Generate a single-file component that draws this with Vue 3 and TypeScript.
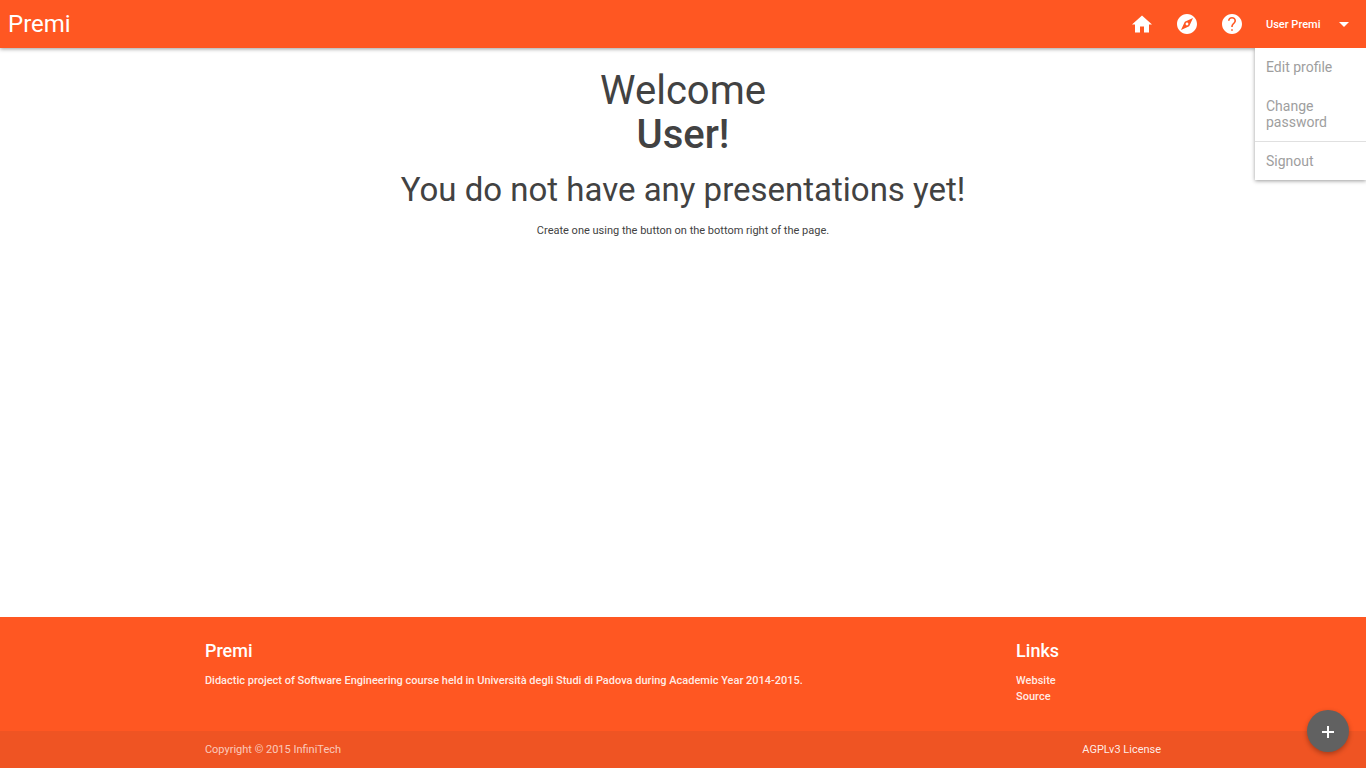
<script setup lang="ts">
interface NavIcon {
  label: string
  path: string
}

const navIcons: NavIcon[] = [
  { label: 'Home', path: 'M10 20.5v-6h4v6h5v-8h3L12 3.5 2 12.5h3v8z' },
  {
    label: 'Explore',
    path: 'M12 10.6c-.77 0-1.4.63-1.4 1.4s.63 1.4 1.4 1.4c.77 0 1.4-.63 1.4-1.4s-.63-1.4-1.4-1.4zM12 2C6.48 2 2 6.48 2 12s4.48 10 10 10 10-4.48 10-10S17.52 2 12 2zm2.19 12.19L6 18l3.81-8.19L18 6l-3.81 8.19z',
  },
  {
    label: 'Help',
    path: 'M12 2C6.48 2 2 6.48 2 12s4.48 10 10 10 10-4.48 10-10S17.52 2 12 2zm.8 16.8h-1.6v-1.6h1.6v1.6zm2.07-7.55l-.9.92C13.25 12.9 12.8 13.5 12.8 15h-1.6v-.5c0-1.1.45-2.1 1.17-2.83l1.24-1.26c.37-.36.79-.86.79-1.61 0-1.3-1.1-2.2-2.4-2.2s-2.4.9-2.4 2.2H8c0-2.21 1.79-3.8 4-3.8s4 1.59 4 3.8c0 .88-.56 1.88-1.13 2.45z',
  },
]
</script>

<template>
  <div class="page">
    <header class="bar">
      <a class="brand" href="#">Premi</a>
      <nav class="nav">
        <a v-for="icon in navIcons" :key="icon.label" class="nav-link" href="#" :aria-label="icon.label">
          <svg viewBox="0 0 24 24" aria-hidden="true"><path :d="icon.path" /></svg>
        </a>
      </nav>
      <div class="user">
        <button class="user-button" type="button" aria-haspopup="true" aria-expanded="true">
          User Premi
          <svg viewBox="0 0 24 24" aria-hidden="true"><path d="M7 9l5 5 5-5z" /></svg>
        </button>
        <div class="menu">
          <a href="#">Edit profile</a>
          <a href="#">Change password</a>
          <a class="divided" href="#">Signout</a>
        </div>
      </div>
    </header>

    <main class="content">
      <h1>Welcome<br /><strong>User!</strong></h1>
      <h2>You do not have any presentations yet!</h2>
      <p>Create one using the button on the bottom right of the page.</p>
    </main>

    <footer class="footer">
      <div class="container columns">
        <section class="about">
          <h3>Premi</h3>
          <p>Didactic project of Software Engineering course held in Università degli Studi di Padova during Academic Year 2014-2015.</p>
        </section>
        <section class="links">
          <h3>Links</h3>
          <ul>
            <li><a href="#">Website</a></li>
            <li><a href="#">Source</a></li>
          </ul>
        </section>
      </div>
      <div class="copyright">
        <div class="container legal">
          <span>Copyright © 2015 InfiniTech</span>
          <a href="#">AGPLv3 License</a>
        </div>
      </div>
    </footer>

    <button class="add" type="button" aria-label="New presentation">
      <svg viewBox="0 0 20 20" aria-hidden="true"><path d="M9 5h2v5h5v2h-5v5H9v-5H4v-2h5z" /></svg>
    </button>
  </div>
</template>

<style>
body {
  margin: 0;
  background: #fff;
}
</style>

<style scoped>
.page {
  display: flex;
  flex-direction: column;
  min-height: 100vh;
  font-family: Roboto, sans-serif;
  font-size: 11px;
  line-height: 16px;
  color: #424242;
}
a {
  color: inherit;
  text-decoration: none;
}
h1, h2, h3, p, ul {
  margin: 0;
  padding: 0;
}
svg {
  display: block;
  fill: currentColor;
}
.bar {
  position: relative;
  display: flex;
  align-items: center;
  height: 48px;
  background: #ff5722;
  color: #fff;
  box-shadow: 0 1px 4px rgba(0, 0, 0, 0.4);
}
.brand {
  padding-left: 8px;
  font-size: 24px;
  line-height: 48px;
}
.nav {
  display: flex;
  gap: 21px;
  margin-left: auto;
}
.nav-link svg {
  width: 24px;
  height: 24px;
}
.user {
  position: relative;
  width: 111px;
  margin-left: 11px;
}
.user-button {
  display: flex;
  align-items: center;
  justify-content: space-between;
  width: 100%;
  height: 48px;
  padding: 2px 10px 0 11px;
  border: 0;
  background: none;
  color: inherit;
  font: 500 11px/16px Roboto, sans-serif;
}
.user-button svg {
  width: 24px;
  height: 24px;
}
.menu {
  position: absolute;
  top: 48px;
  left: 0;
  right: 0;
  background: #fff;
  color: #9e9e9e;
  font-size: 14px;
  box-shadow: 0 1px 4px rgba(0, 0, 0, 0.4);
  clip-path: inset(0 0 -8px -8px);
}
.menu a {
  display: block;
  padding: 11px;
}
.menu a + a {
  padding-top: 12px;
}
.menu a.divided {
  padding-top: 11px;
  border-top: 1px solid #e0e0e0;
}
.content {
  flex: 1;
  padding-top: 21px;
  text-align: center;
}
h1 {
  font-size: 40px;
  font-weight: 400;
  line-height: 44px;
}
h1 strong {
  font-weight: 500;
}
h2 {
  margin: 15px 0;
  font-size: 33px;
  font-weight: 400;
  line-height: 36px;
}
.footer {
  background: #ff5722;
  color: #fff;
}
.container {
  width: 70%;
  margin: 0 auto;
}
.columns {
  display: flex;
  justify-content: space-between;
  padding: 23px 0 26px;
  font-weight: 500;
}
h3 {
  margin-bottom: 11px;
  font-size: 18px;
  font-weight: 500;
  line-height: 22px;
}
.about p,
.links ul {
  color: rgba(255, 255, 255, 0.9);
}
.links {
  width: 145px;
}
ul {
  list-style: none;
}
.copyright {
  padding: 11px 0 10px;
  background: #ef5423;
}
.legal {
  display: flex;
  justify-content: space-between;
}
.legal span {
  color: rgba(255, 255, 255, 0.7);
}
.legal a {
  color: rgba(255, 255, 255, 0.9);
}
.add {
  position: fixed;
  right: 17px;
  bottom: 16px;
  display: grid;
  place-items: center;
  width: 42px;
  height: 42px;
  padding: 0;
  border: 0;
  border-radius: 50%;
  background: #616161;
  color: #fff;
  box-shadow: 0 2px 5px rgba(0, 0, 0, 0.3);
}
.add svg {
  width: 20px;
  height: 20px;
}
</style>
